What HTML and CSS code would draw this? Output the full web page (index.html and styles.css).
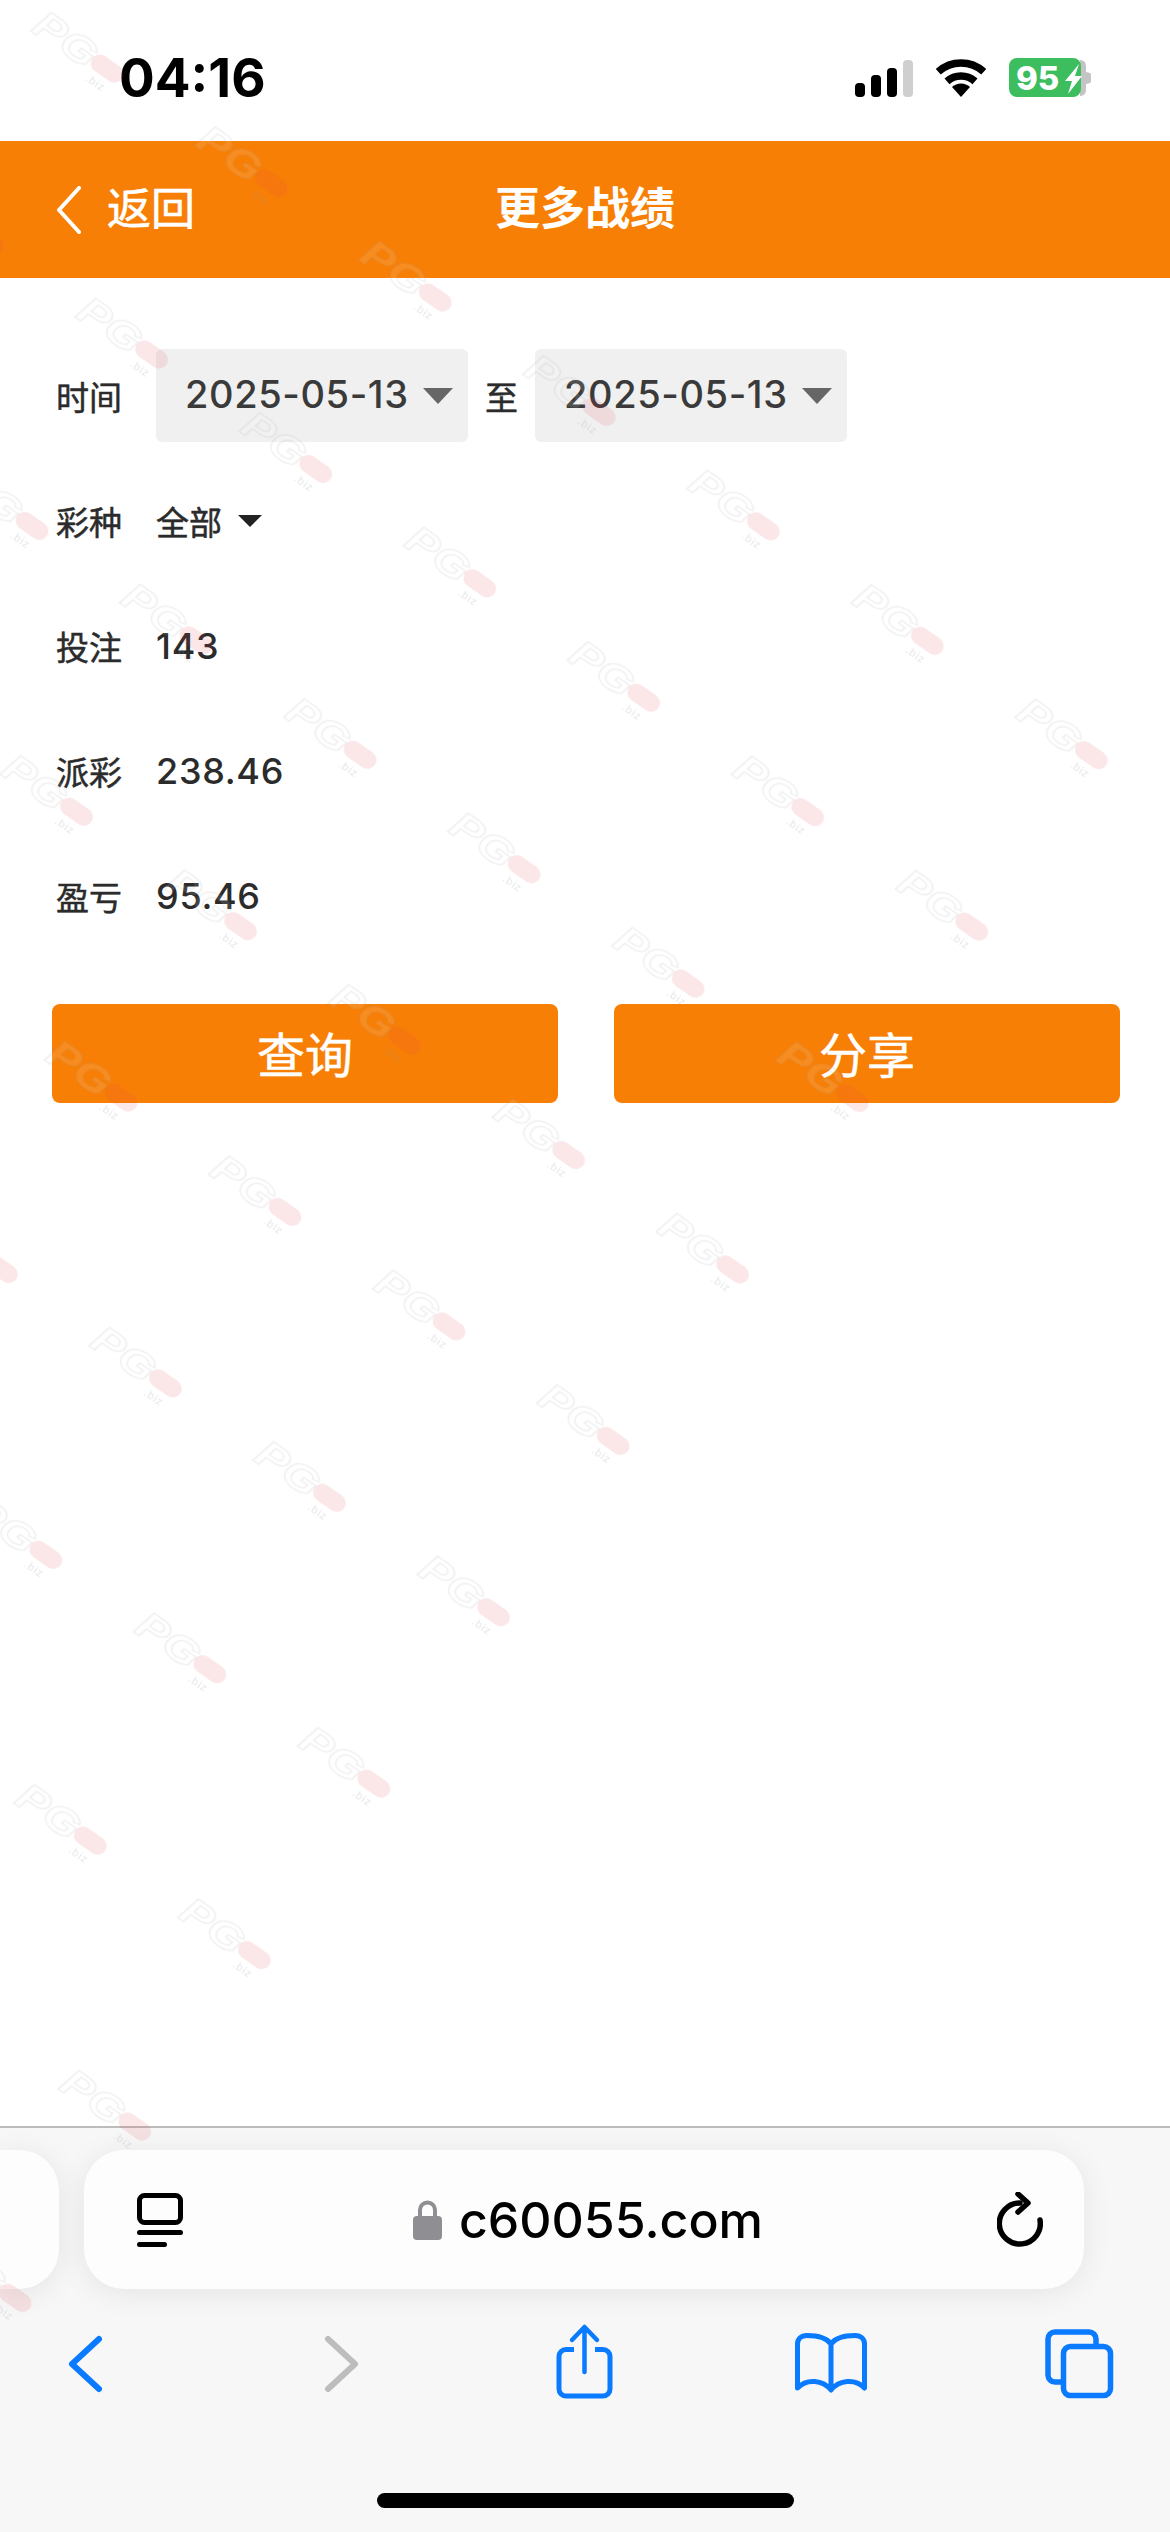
FILE: index.html
```html
<!DOCTYPE html>
<html lang="zh-CN">
<head>
    <meta charset="UTF-8">
    <meta name="viewport" content="width=device-width, initial-scale=1.0">
    <title>更多战绩</title>
    <link rel="stylesheet" href="styles.css">
</head>
<body>
    <div class="page">
        <div class="status-bar">
            <span class="clock">04:16</span>
            <div class="status-icons">
                <svg class="signal" width="58" height="37" viewBox="0 0 58 37">
                    <rect x="0" y="23" width="10" height="14" rx="4" fill="#000"/>
                    <rect x="16" y="15" width="10" height="22" rx="4" fill="#000"/>
                    <rect x="32" y="8" width="10" height="29" rx="4" fill="#000"/>
                    <rect x="48" y="0" width="10" height="37" rx="4" fill="#cfcfcf"/>
                </svg>
                <svg class="wifi" width="50" height="38" viewBox="0 0 50 38">
                    <path d="M2.25 12.7A34 34 0 0 1 47.75 12.7M11 22.4A21 21 0 0 1 39 22.4" fill="none" stroke="#000" stroke-width="7.5"/>
                    <path d="M25 38L16 28A13 13 0 0 1 34 28Z" fill="#000"/>
                </svg>
                <svg class="battery" width="82" height="40" viewBox="0 0 82 40">
                    <path d="M71 2h1a6 6 0 0 1 5 6v24a6 6 0 0 1-5 6h-1z" fill="#c4c4c4"/>
                    <path d="M77 14a7 6 0 0 1 0 12z" fill="#c4c4c4"/>
                    <rect x="0" y="0" width="72" height="39" rx="8" fill="#3cbd5e"/>
                    <text x="7" y="32" class="battery-text">95</text>
                    <path d="M70 6L56 23h7l-4 13 14-18h-7z" fill="#fff"/>
                </svg>
            </div>
        </div>

        <header class="nav">
            <div class="nav-back">
                <svg width="26" height="48" viewBox="0 0 26 48">
                    <path d="M23 2L3 24L23 46" fill="none" stroke="#fff" stroke-width="4" stroke-linecap="round" stroke-linejoin="round"/>
                </svg>
                <span class="nav-text">返回</span>
            </div>
            <h1 class="nav-title">更多战绩</h1>
            <div></div>
        </header>

        <main class="content">
            <div class="row">
                <span class="label">时间</span>
                <div class="date-select"><span>2025-05-13</span><i class="arrow"></i></div>
                <span class="to">至</span>
                <div class="date-select"><span>2025-05-13</span><i class="arrow"></i></div>
            </div>
            <div class="row">
                <span class="label">彩种</span>
                <span class="kind">全部</span>
                <i class="arrow-small"></i>
            </div>
            <div class="row">
                <span class="label">投注</span>
                <span class="value">143</span>
            </div>
            <div class="row">
                <span class="label">派彩</span>
                <span class="value">238.46</span>
            </div>
            <div class="row">
                <span class="label">盈亏</span>
                <span class="value">95.46</span>
            </div>
            <div class="actions">
                <button class="btn">查询</button>
                <button class="btn">分享</button>
            </div>
        </main>

        <footer class="toolbar">
            <div class="url-row">
                <div class="prev-tab"></div>
                <div class="url-pill">
                    <svg width="46" height="54" viewBox="0 0 46 54">
                        <rect x="2.5" y="2.5" width="41" height="27" rx="5" fill="none" stroke="#000" stroke-width="5"/>
                        <rect x="0" y="37" width="46" height="5" rx="2.5" fill="#000"/>
                        <rect x="0" y="49" width="30" height="5" rx="2.5" fill="#000"/>
                    </svg>
                    <div class="url">
                        <svg width="29" height="40" viewBox="0 0 29 40">
                            <path d="M7 18V10a7.5 7.5 0 0 1 15 0v8" fill="none" stroke="#8e8e93" stroke-width="4"/>
                            <rect x="0" y="16" width="29" height="24" rx="4" fill="#8e8e93"/>
                        </svg>
                        <span>c60055.com</span>
                    </div>
                    <svg width="46" height="56" viewBox="0 0 46 56">
                        <path d="M23 11A20.5 20.5 0 1 0 43 28" fill="none" stroke="#000" stroke-width="5.5" stroke-linecap="round"/>
                        <path d="M21 2L31 11L21 20" fill="none" stroke="#000" stroke-width="5.5" stroke-linecap="round" stroke-linejoin="round"/>
                    </svg>
                </div>
            </div>
            <div class="tool-icons">
                <svg width="100" height="84" viewBox="0 0 100 84">
                    <path d="M64 19L37 44L64 69" fill="none" stroke="#0a7aff" stroke-width="6" stroke-linecap="round" stroke-linejoin="round"/>
                </svg>
                <svg width="100" height="84" viewBox="0 0 100 84">
                    <path d="M45 19L72 44L45 69" fill="none" stroke="#bdbdbd" stroke-width="6" stroke-linecap="round" stroke-linejoin="round"/>
                </svg>
                <svg width="100" height="84" viewBox="0 0 100 84">
                    <path d="M43 29.5H35a7 7 0 0 0-7 7V69a7 7 0 0 0 7 7H72a7 7 0 0 0 7-7V36.500a7 7 0 0 0-7-7H64" fill="none" stroke="#0a7aff" stroke-width="5"/>
                    <path d="M53.500 52V8M41 20L53.500 7L66 20" fill="none" stroke="#0a7aff" stroke-width="4.500" stroke-linecap="round" stroke-linejoin="round"/>
                </svg>
                <svg width="100" height="84" viewBox="0 0 100 84">
                    <path d="M52 24C47 17 38 15.500 28 15.500C22 15.500 18.500 19 18.500 24V68C28 58 44 60 52 70C60 60 76 58 85.500 68V24C85.500 19 82 15.500 76 15.500C66 15.500 57 17 52 24ZM52 24V66" fill="none" stroke="#0a7aff" stroke-width="5" stroke-linejoin="round"/>
                </svg>
                <svg width="100" height="84" viewBox="0 0 100 84">
                    <rect x="36.500" y="26.500" width="47" height="49" rx="7" fill="none" stroke="#0a7aff" stroke-width="5.500"/>
                    <path d="M34 62H28a7 7 0 0 1-7-7V19a7 7 0 0 1 7-7H62a7 7 0 0 1 7 7V24" fill="none" stroke="#0a7aff" stroke-width="5.500"/>
                </svg>
            </div>
            <div class="home-row"><div class="home-bar"></div></div>
        </footer>

        <!-- watermark layer: one big rotated sheet, its top and right edges cross the page -->
        <svg class="watermark" width="1170" height="2532">
            <defs>
                <pattern id="wm" width="200" height="209" patternUnits="userSpaceOnUse">
                    <text transform="translate(55 113) scale(1.25 1)" class="wm-pg">PG</text>
                    <rect x="122" y="91" width="36" height="18" rx="9" class="wm-pill"/>
                    <text x="128" y="122" class="wm-biz">.biz</text>
                </pattern>
            </defs>
            <g transform="translate(285 1212) rotate(34.9) translate(-140 -100)">
                <rect x="-6000" y="-836" width="6600" height="6000" fill="url(#wm)"/>
            </g>
        </svg>
    </div>
</body>
</html>
```

FILE: styles.css
```css
body {
    margin: 0;
    padding: 0;
    background: #fff;
    font-family: Inter, "Noto Sans CJK SC", sans-serif;
    color: #2b2b2b;
}
.page {
    position: relative;
    width: 1170px;
    height: 2532px;
    overflow: hidden;
    display: flex;
    flex-direction: column;
}

/* status bar */
.status-bar {
    height: 141px;
    box-sizing: border-box;
    padding: 15px 79px 0 119px;
    display: flex;
    justify-content: space-between;
    align-items: center;
}
.clock {
    font-family: Inter, sans-serif;
    font-size: 53px;
    font-weight: 700;
    color: #000;
}
.status-icons {
    display: flex;
    align-items: center;
    gap: 23px;
}
.battery-text {
    font-family: Inter, sans-serif;
    font-size: 33px;
    font-weight: 800;
    fill: #fff;
}

/* orange header */
.nav {
    height: 137px;
    box-sizing: border-box;
    background: #f87f05;
    color: #fff;
    display: grid;
    grid-template-columns: 1fr auto 1fr;
    align-items: center;
    padding: 0 56px;
}
.nav-back {
    display: flex;
    align-items: center;
    gap: 25px;
}
.nav-text {
    padding-bottom: 8px;
    font-size: 44px;
    -webkit-text-stroke: 0.6px #fff;
}
.nav-title {
    margin: 0;
    padding-bottom: 8px;
    font-size: 45px;
    font-weight: 700;
}

/* form */
.content {
    flex: 1;
    padding: 71px 50px 0 56px;
}
.row {
    display: flex;
    align-items: center;
    height: 93px;
    margin-bottom: 32px;
}
.label {
    width: 100px;
    font-size: 33px;
    -webkit-text-stroke: 0.5px #2b2b2b;
}
.value {
    font-size: 36px;
    font-weight: 500;
    letter-spacing: 0.7px;
}
.kind {
    font-size: 33px;
    -webkit-text-stroke: 0.5px #2b2b2b;
}
.date-select {
    width: 312px;
    height: 93px;
    box-sizing: border-box;
    padding: 0 0 3px 29px;
    background: #f0f0f0;
    border-radius: 6px;
    display: flex;
    align-items: center;
    font-size: 38px;
    font-weight: 500;
    letter-spacing: 0.6px;
    color: #3a3a3a;
}
.to {
    width: 67px;
    text-align: center;
    font-size: 33px;
    -webkit-text-stroke: 0.5px #2b2b2b;
}
.arrow {
    margin-left: 14px;
    margin-top: 3px;
    border-top: 16px solid #666;
    border-left: 15px solid transparent;
    border-right: 15px solid transparent;
}
.arrow-small {
    margin-left: 16px;
    border-top: 12px solid #222;
    border-left: 12px solid transparent;
    border-right: 12px solid transparent;
}
.actions {
    display: flex;
    justify-content: space-between;
    margin-top: 62px;
    margin-left: -4px;
}
.btn {
    width: 506px;
    height: 99px;
    padding: 0 0 4px;
    border: none;
    border-radius: 8px;
    background: #f87f05;
    color: #fff;
    font-family: Inter, "Noto Sans CJK SC", sans-serif;
    font-size: 48px;
    -webkit-text-stroke: 0.5px #fff;
}

/* safari toolbar */
.toolbar {
    height: 406px;
    box-sizing: border-box;
    background: #f7f7f7;
    border-top: 2px solid #bcbcbc;
}
.url-row {
    display: flex;
    gap: 25px;
    padding-top: 22px;
}
.prev-tab {
    width: 59px;
    height: 139px;
    background: #fdfdfd;
    border-radius: 0 40px 40px 0;
    box-shadow: 0 4px 30px rgba(0, 0, 0, 0.08);
}
.url-pill {
    width: 1000px;
    height: 139px;
    box-sizing: border-box;
    padding: 0 41px 0 53px;
    background: #fdfdfd;
    border-radius: 40px;
    box-shadow: 0 4px 30px rgba(0, 0, 0, 0.08);
    display: flex;
    justify-content: space-between;
    align-items: center;
}
.url {
    display: flex;
    align-items: center;
    gap: 17px;
    margin-right: 4px;
    font-family: Inter, sans-serif;
    font-size: 50px;
    font-weight: 500;
    color: #000;
}
.tool-icons {
    display: flex;
    gap: 148px;
    padding: 31px 0 0 35px;
}
.home-row {
    display: flex;
    justify-content: center;
    padding-top: 89px;
}
.home-bar {
    width: 417px;
    height: 15px;
    border-radius: 8px;
    background: #000;
}

/* watermark */
.watermark {
    position: absolute;
    top: 0;
    left: 0;
    pointer-events: none;
}
.wm-pg {
    font-family: "Liberation Sans", sans-serif;
    font-size: 38px;
    font-style: italic;
    font-weight: 700;
    fill: rgba(255, 255, 255, 0.1);
    stroke: rgba(150, 150, 150, 0.13);
    stroke-width: 1.5px;
}
.wm-pill {
    fill: rgba(225, 60, 80, 0.13);
}
.wm-biz {
    font-family: "Liberation Sans", sans-serif;
    font-size: 11px;
    letter-spacing: 1px;
    fill: rgba(150, 150, 150, 0.25);
}
```
